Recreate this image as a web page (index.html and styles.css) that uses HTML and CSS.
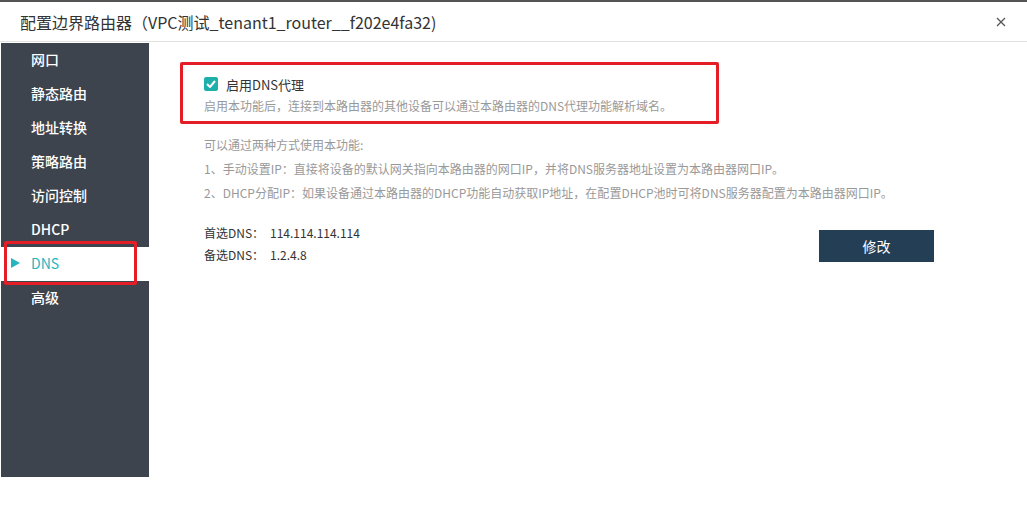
FILE: index.html
```html
<!DOCTYPE html>
<html lang="zh-CN">
<head>
<meta charset="utf-8">
<title>配置边界路由器</title>
<link rel="stylesheet" href="styles.css">
</head>
<body>
<div class="topbar"></div>
<div class="dialog">
  <div class="header">
    <div class="title">配置边界路由器（VPC测试_tenant1_router__f202e4fa32)</div>
    <svg class="close" width="10" height="10" viewBox="0 0 10 10"><path d="M1 1L9 9M9 1L1 9" stroke="#555" stroke-width="1.3" fill="none"/></svg>
  </div>
  <div class="body">
    <ul class="sidebar">
      <li class="item">网口</li>
      <li class="item">静态路由</li>
      <li class="item">地址转换</li>
      <li class="item">策略路由</li>
      <li class="item">访问控制</li>
      <li class="item">DHCP</li>
      <li class="item active"><span class="arrow"></span>DNS<span class="mark"></span></li>
      <li class="item">高级</li>
    </ul>
    <div class="content">
      <div class="proxy-box">
        <label class="check-row">
          <span class="checkbox"><svg width="10" height="8" viewBox="0 0 10 8"><path d="M1 4L4 7L9 1" stroke="#fff" stroke-width="2" fill="none"/></svg></span>
          <span class="check-label">启用DNS代理</span>
        </label>
        <p class="desc">启用本功能后，连接到本路由器的其他设备可以通过本路由器的DNS代理功能解析域名。</p>
      </div>
      <div class="usage">
        <p>可以通过两种方式使用本功能:</p>
        <p>1、手动设置IP：直接将设备的默认网关指向本路由器的网口IP，并将DNS服务器地址设置为本路由器网口IP。</p>
        <p>2、DHCP分配IP：如果设备通过本路由器的DHCP功能自动获取IP地址，在配置DHCP池时可将DNS服务器配置为本路由器网口IP。</p>
      </div>
      <div class="dns-row">
        <div class="dns-list">
          <div class="dns"><span class="dns-key">首选DNS：</span><span>114.114.114.114</span></div>
          <div class="dns"><span class="dns-key">备选DNS：</span><span>1.2.4.8</span></div>
        </div>
        <button class="btn">修改</button>
      </div>
    </div>
  </div>
</div>
</body>
</html>
```
FILE: styles.css
```css
* { box-sizing: border-box; }
html, body { margin: 0; padding: 0; background: #fff; }
body {
  font-family: "Noto Sans CJK SC", "Noto Sans", sans-serif;
  color: #333;
  width: 1027px;
  height: 510px;
  overflow: hidden;
}
.topbar { height: 2px; background: #555; }
.dialog { background: #fff; }
.header {
  height: 40px;
  border-bottom: 1px solid #e2e2e2;
  display: flex;
  align-items: center;
  justify-content: space-between;
  padding: 0 21px 0 20px;
}
.title { font-size: 16px; color: #333; line-height: 20px; }
.close { display: block; }
.body { display: flex; padding-top: 1px; padding-left: 1px; }
.sidebar {
  list-style: none;
  margin: 0;
  padding: 0;
  width: 148px;
  height: 434px;
  background: #3d444d;
  flex: none;
}
.item {
  height: 34px;
  line-height: 32px;
  padding-left: 30px;
  color: #fff;
  font-size: 14px;
  font-weight: 500;
  position: relative;
}
.item.active { background: #fff; color: #26b5be; font-weight: 400; }
.arrow {
  position: absolute;
  left: 10px;
  top: 11px;
  width: 0; height: 0;
  border-top: 5px solid transparent;
  border-bottom: 5px solid transparent;
  border-left: 9px solid #26b5be;
}
.mark {
  position: absolute;
  left: 3px;
  top: -6px;
  width: 133px;
  height: 44px;
  border: 3px solid #e41d27;
  border-radius: 2px;
}
.content { flex: 1; padding: 19px 0 0 31px; }
.proxy-box {
  width: 539px;
  height: 62px;
  border: 3px solid #e41d27;
  border-radius: 2px;
  padding: 9px 0 0 21px;
}
.check-row { display: flex; align-items: center; height: 20px; }
.checkbox {
  width: 14px; height: 14px;
  background: #1fafaa;
  border-radius: 2px;
  display: flex; align-items: center; justify-content: center;
  margin-right: 8px;
}
.check-label { font-size: 13px; color: #333; }
.desc { margin: 2px 0 0; font-size: 12px; color: #999; line-height: 20px; }
.usage { margin-top: 9px; padding-left: 24px; }
.usage p { margin: 0; font-size: 12px; color: #999; line-height: 24px; }
.dns-row { display: flex; align-items: flex-start; margin-top: 17px; padding-left: 24px; }
.dns-list { width: 615px; }
.dns { font-size: 12px; line-height: 22px; color: #333; }
.dns-key { display: inline-block; width: 66px; }
.btn {
  margin-top: 8px;
  width: 115px;
  height: 32px;
  border: none;
  background: #243f55;
  color: #fff;
  font-family: inherit;
  font-size: 14px;
  padding: 0;
}
```
